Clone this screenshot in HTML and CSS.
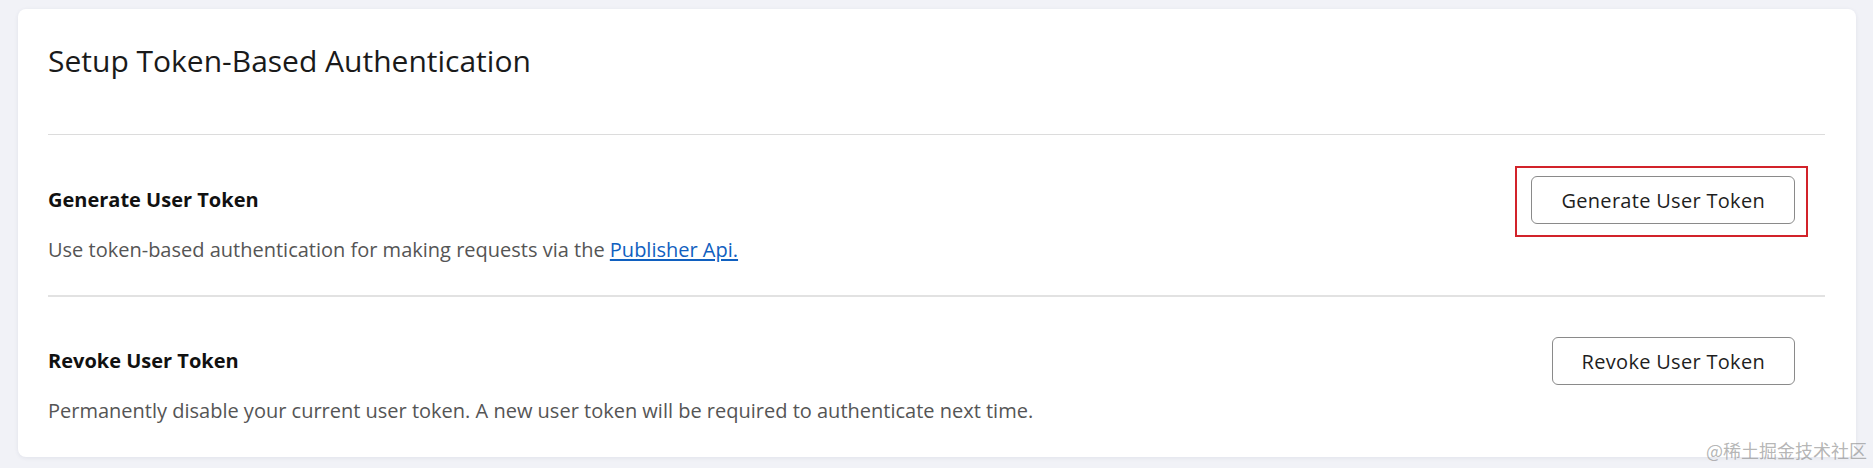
FILE: index.html
```html
<!DOCTYPE html>
<html lang="en">
<head>
<meta charset="utf-8">
<title>Setup Token-Based Authentication</title>
<link rel="stylesheet" href="styles.css">
</head>
<body>
<div class="page">
  <div class="card">
    <h1 class="title">Setup Token-Based Authentication</h1>
    <section class="section first">
      <div class="row">
        <h2 class="heading">Generate User Token</h2>
        <div class="highlight">
          <button class="btn" type="button">Generate User Token</button>
        </div>
      </div>
      <p class="desc">Use token-based authentication for making requests via the <a class="link" href="#">Publisher Api.</a></p>
    </section>
    <section class="section second">
      <div class="row">
        <h2 class="heading">Revoke User Token</h2>
        <button class="btn" type="button">Revoke User Token</button>
      </div>
      <p class="desc">Permanently disable your current user token. A new user token will be required to authenticate next time.</p>
    </section>
  </div>
  <div class="watermark">@稀土掘金技术社区</div>
</div>
</body>
</html>
```

FILE: styles.css
```css
* { box-sizing: border-box; }
html, body { margin: 0; padding: 0; }
body {
  background: #f1f2f7;
  font-family: "Open Sans", "Noto Sans", sans-serif;
  width: 1873px;
  height: 468px;
  overflow: hidden;
}
.page {
  position: relative;
  padding: 9px 17px 11px 18px;
  height: 468px;
}
.card {
  background: #ffffff;
  border-radius: 8px;
  box-shadow: 0 1px 4px rgba(40, 50, 90, 0.08);
  height: 448px;
  padding: 33px 31px 0 30px;
}
.title {
  margin: 0;
  font-size: 30px;
  line-height: 38px;
  font-weight: 400;
  color: #1a1a1a;
  padding-bottom: 54px;
  border-bottom: 1px solid #dcdcdc;
}
.section {
  padding: 41px 0 33px 0;
}
.section.first {
  border-bottom: 2px solid #e2e2e2;
}
.section.second {
  padding-top: 40px;
}
.row {
  display: flex;
  align-items: center;
  justify-content: space-between;
  height: 48px;
  padding-right: 30px;
}
.heading {
  margin: 0;
  font-size: 20px;
  line-height: 24px;
  font-weight: 700;
  color: #111111;
}
.desc {
  margin: 14px 0 0 0;
  font-size: 20px;
  line-height: 24px;
  color: #555555;
}
.link {
  color: #1060c0;
  text-decoration: underline;
  text-underline-offset: 2px;
}
.highlight {
  position: relative;
}
.highlight::after {
  content: "";
  position: absolute;
  top: -10px;
  left: -16px;
  right: -13px;
  bottom: -13px;
  border: 2px solid #d2232a;
  pointer-events: none;
}
.btn {
  height: 48px;
  padding: 0 29px;
  background: #ffffff;
  border: 1px solid #8a8a8a;
  border-radius: 6px;
  font-family: "Open Sans", "Noto Sans", sans-serif;
  font-size: 20px;
  letter-spacing: 0.3px;
  color: #1e1e1e;
  display: block;
}
.watermark {
  position: absolute;
  right: 6px;
  bottom: 8px;
  font-family: "Noto Sans CJK SC", sans-serif;
  font-size: 18px;
  line-height: 20px;
  color: rgba(140, 140, 140, 0.65);
  letter-spacing: 0;
}
```
